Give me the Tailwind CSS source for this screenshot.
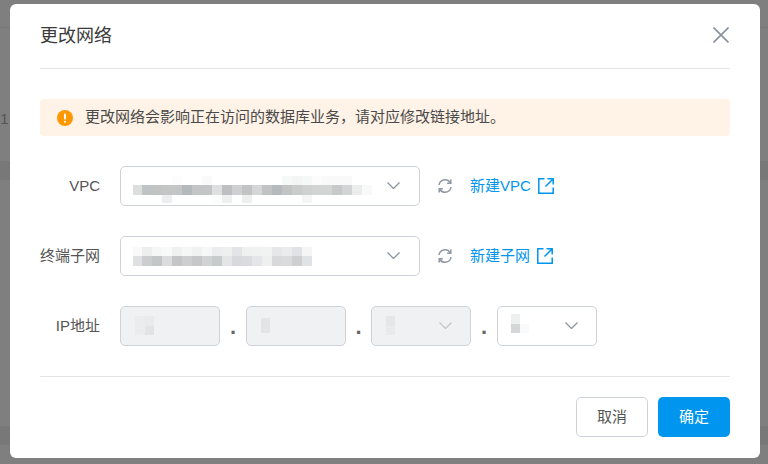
<!DOCTYPE html>
<html lang="zh-CN">
  <head>
    <meta charset="UTF-8" />
    <title>更改网络</title>
    <script src="https://cdn.jsdelivr.net/npm/@tailwindcss/browser@4"></script>
  </head>
  <body class="m-0 w-[768px] h-[464px] overflow-hidden bg-[#7f7f7f] font-['Liberation_Sans','Noto_Sans_CJK_SC',sans-serif]">
    <div class="relative w-[768px] h-[464px] pt-[4px] pl-[10px]">
      <!-- page behind the overlay -->
      <div class="absolute left-0 top-[27px] w-full h-px bg-[#777]"></div>
      <div class="absolute left-0 top-[161px] w-full h-[19px] bg-[#787878]"></div>
      <div class="absolute left-0 top-[426px] w-full h-[19px] bg-[#787878]"></div>
      <div class="absolute -left-[8px] top-[109px] text-[15px] leading-5 text-[#555]">31</div>

      <!-- Dialog -->
      <div class="relative w-[750px] h-[454px] bg-white rounded-[6px] px-[30px]">
        <div class="flex items-center justify-between h-[65px] border-b border-[#e2e5e9]">
          <h1 class="text-[18px] leading-[62px] font-normal text-[#3a3a3a]">更改网络</h1>
          <svg class="mr-[1px] -mt-[2px]" width="16" height="16" viewBox="0 0 16 16" fill="none" stroke="#87919c" stroke-width="1.6">
            <path d="M0.5 0.5 L15.5 15.5 M15.5 0.5 L0.5 15.5" />
          </svg>
        </div>

        <!-- Alert -->
        <div class="flex items-center h-[37px] mt-[30px] px-[17px] gap-[12px] bg-[#fff2e6] rounded-[4px] text-[15px] text-[#4a4a4a]">
          <svg width="16" height="16" viewBox="0 0 16 16">
            <circle cx="8" cy="8" r="8" fill="#ff9800" />
            <rect x="7" y="3.5" width="2" height="6" rx="1" fill="#fff" />
            <rect x="7" y="10.8" width="2" height="2" rx="1" fill="#fff" />
          </svg>
          <span>更改网络会影响正在访问的数据库业务，请对应修改链接地址。</span>
        </div>

        <!-- Form -->
        <div class="flex flex-col gap-[30px] mt-[30px]">
          <div class="flex items-center h-[40px]">
            <label class="w-[60px] text-right text-[15px] text-[#555]">VPC</label>
            <div class="flex items-center justify-between w-[300px] h-[40px] ml-[20px] pl-[12px] pr-[19px] border border-[#ced3d9] rounded-[5px]">
              <svg class="mt-[6px]" width="240" height="27" viewBox="133 172 240 27">
                <rect x="172" y="172" width="10" height="9" fill="#fcfcfc" />
                <rect x="202" y="172" width="10" height="9" fill="#fafafa" />
                <rect x="282" y="172" width="10" height="9" fill="#f6f8f7" />
                <rect x="292" y="172" width="10" height="9" fill="#f3f5f4" />
                <rect x="302" y="172" width="10" height="9" fill="#f6f8f7" />
                <rect x="312" y="172" width="10" height="9" fill="#fcfcfc" />
                <rect x="322" y="172" width="30" height="9" fill="#f8f9f8" />
                <rect x="133" y="181" width="9" height="10" fill="#dcdddd" />
                <rect x="142" y="181" width="10" height="10" fill="#bfc3c3" />
                <rect x="152" y="181" width="10" height="10" fill="#c2c4c4" />
                <rect x="162" y="181" width="20" height="10" fill="#c4c6c6" />
                <rect x="182" y="181" width="10" height="10" fill="#b4b9bc" />
                <rect x="192" y="181" width="10" height="10" fill="#c2c5c5" />
                <rect x="202" y="181" width="10" height="10" fill="#c4c6c6" />
                <rect x="212" y="181" width="10" height="10" fill="#dedfe0" />
                <rect x="222" y="181" width="10" height="10" fill="#bdbfc0" />
                <rect x="232" y="181" width="10" height="10" fill="#cfd0d1" />
                <rect x="242" y="181" width="10" height="10" fill="#c2c3c4" />
                <rect x="252" y="181" width="10" height="10" fill="#d5d6d6" />
                <rect x="262" y="181" width="10" height="10" fill="#c2c3c4" />
                <rect x="272" y="181" width="10" height="10" fill="#b5babd" />
                <rect x="282" y="181" width="10" height="10" fill="#c2c4c4" />
                <rect x="292" y="181" width="10" height="10" fill="#cacbcb" />
                <rect x="302" y="181" width="10" height="10" fill="#cfd0d0" />
                <rect x="312" y="181" width="20" height="10" fill="#d3d4d4" />
                <rect x="332" y="181" width="10" height="10" fill="#c8c9ca" />
                <rect x="342" y="181" width="10" height="10" fill="#d3d4d4" />
                <rect x="352" y="181" width="10" height="10" fill="#ebecec" />
                <rect x="362" y="181" width="10" height="10" fill="#f9f9f9" />
                <rect x="162" y="191" width="10" height="8" fill="#eceeef" />
                <rect x="212" y="191" width="10" height="8" fill="#fcfcfc" />
                <rect x="222" y="191" width="10" height="8" fill="#eeefef" />
                <rect x="242" y="191" width="10" height="8" fill="#eeefef" />
                <rect x="302" y="191" width="10" height="8" fill="#f5f5f5" />
              </svg>
              <svg class="-mt-[1px]" width="13" height="7" viewBox="0 0 13 7" fill="none" stroke="#8c949e" stroke-width="1.3">
                <path d="M0.5 0.5 L6.5 6.5 L12.5 0.5" />
              </svg>
            </div>
            <svg class="ml-[17px]" width="16" height="16" viewBox="0 0 16 16" fill="none" stroke="#8f97a1" stroke-width="1.5">
              <path d="M2 7 A6 6 0 0 1 13 4.5" />
              <path d="M13.8 1.5 V5.2 H10.2" />
              <path d="M14 9 A6 6 0 0 1 3 11.5" />
              <path d="M2.2 14.5 V10.8 H5.8" />
            </svg>
            <a class="flex items-center ml-[17px] text-[15px] text-[#0095ee]">新建VPC
              <svg class="ml-[7px]" width="16" height="16" viewBox="0 0 16 16" fill="none" stroke="#0095ee" stroke-width="1.5">
                <path d="M6.5 0.8 H0.8 V15.2 H15.2 V9.5" />
                <path d="M9.5 0.8 H15.2 V6.5 M15 1 L7.5 8.5" />
              </svg>
            </a>
          </div>

          <div class="flex items-center h-[40px]">
            <label class="w-[60px] text-right text-[15px] text-[#555]">终端子网</label>
            <div class="flex items-center justify-between w-[300px] h-[40px] ml-[20px] pl-[12px] pr-[19px] border border-[#ced3d9] rounded-[5px]">
              <svg width="179" height="19" viewBox="133 245 179 19">
                <rect x="133" y="245" width="9" height="9" fill="#f9f9f9" />
                <rect x="142" y="245" width="10" height="9" fill="#ecefee" />
                <rect x="152" y="245" width="10" height="9" fill="#f5f6f6" />
                <rect x="162" y="245" width="10" height="9" fill="#f9f9f9" />
                <rect x="172" y="245" width="10" height="9" fill="#eff1f0" />
                <rect x="182" y="245" width="10" height="9" fill="#f5f6f6" />
                <rect x="192" y="245" width="10" height="9" fill="#f0f2f1" />
                <rect x="202" y="245" width="10" height="9" fill="#f6f7f7" />
                <rect x="212" y="245" width="10" height="9" fill="#ecedee" />
                <rect x="222" y="245" width="10" height="9" fill="#eeefef" />
                <rect x="232" y="245" width="10" height="9" fill="#e3e4e6" />
                <rect x="242" y="245" width="10" height="9" fill="#eff1f0" />
                <rect x="252" y="245" width="10" height="9" fill="#f0f1f1" />
                <rect x="262" y="245" width="10" height="9" fill="#f1f3f2" />
                <rect x="272" y="245" width="10" height="9" fill="#e6e7e9" />
                <rect x="282" y="245" width="10" height="9" fill="#eaebed" />
                <rect x="292" y="245" width="10" height="9" fill="#e1e2e5" />
                <rect x="302" y="245" width="10" height="9" fill="#f5f5f6" />
                <rect x="133" y="254" width="9" height="10" fill="#dfe0e1" />
                <rect x="142" y="254" width="10" height="10" fill="#cbcdce" />
                <rect x="152" y="254" width="10" height="10" fill="#c3c7c7" />
                <rect x="162" y="254" width="10" height="10" fill="#dbdcdd" />
                <rect x="172" y="254" width="10" height="10" fill="#c3c5c6" />
                <rect x="182" y="254" width="10" height="10" fill="#cdced0" />
                <rect x="192" y="254" width="10" height="10" fill="#c5c7c8" />
                <rect x="202" y="254" width="10" height="10" fill="#d1d2d3" />
                <rect x="212" y="254" width="10" height="10" fill="#c8cbcc" />
                <rect x="222" y="254" width="10" height="10" fill="#e4e5e7" />
                <rect x="232" y="254" width="10" height="10" fill="#d8d9dc" />
                <rect x="242" y="254" width="10" height="10" fill="#dadbde" />
                <rect x="252" y="254" width="10" height="10" fill="#e4e5e7" />
                <rect x="262" y="254" width="10" height="10" fill="#eef0ef" />
                <rect x="272" y="254" width="10" height="10" fill="#d8d9db" />
                <rect x="282" y="254" width="10" height="10" fill="#dadbdc" />
                <rect x="292" y="254" width="10" height="10" fill="#cecfd1" />
                <rect x="302" y="254" width="10" height="10" fill="#e1e2e5" />
              </svg>
              <svg class="-mt-[1px]" width="13" height="7" viewBox="0 0 13 7" fill="none" stroke="#8c949e" stroke-width="1.3">
                <path d="M0.5 0.5 L6.5 6.5 L12.5 0.5" />
              </svg>
            </div>
            <svg class="ml-[17px]" width="16" height="16" viewBox="0 0 16 16" fill="none" stroke="#8f97a1" stroke-width="1.5">
              <path d="M2 7 A6 6 0 0 1 13 4.5" />
              <path d="M13.8 1.5 V5.2 H10.2" />
              <path d="M14 9 A6 6 0 0 1 3 11.5" />
              <path d="M2.2 14.5 V10.8 H5.8" />
            </svg>
            <a class="flex items-center ml-[17px] text-[15px] text-[#0095ee]">新建子网
              <svg class="ml-[7px]" width="16" height="16" viewBox="0 0 16 16" fill="none" stroke="#0095ee" stroke-width="1.5">
                <path d="M6.5 0.8 H0.8 V15.2 H15.2 V9.5" />
                <path d="M9.5 0.8 H15.2 V6.5 M15 1 L7.5 8.5" />
              </svg>
            </a>
          </div>

          <div class="flex items-center h-[40px]">
            <label class="w-[60px] text-right text-[15px] text-[#555]">IP地址</label>
            <div class="flex items-center ml-[20px]">
              <div class="w-[100px] h-[40px] pl-[14px] flex items-center bg-[#eff1f3] border border-[#ced3d9] rounded-[5px]">
                <svg class="-mt-[1px]" width="19" height="19" viewBox="0 0 19 19">
                  <rect width="10" height="10" fill="#ebecee" />
                  <rect x="10" width="9" height="10" fill="#e8eaec" />
                  <rect y="10" width="10" height="9" fill="#ebecee" />
                  <rect x="10" y="10" width="9" height="9" fill="#e1e4e7" />
                </svg>
              </div>
              <span class="w-[26px] text-center text-[22px] font-bold leading-[40px] pt-[1px] text-[#666]">.</span>
              <div class="w-[100px] h-[40px] pl-[14px] flex items-center bg-[#eff1f3] border border-[#ced3d9] rounded-[5px]">
                <div class="w-[9px] h-[15px] -mt-[1px] bg-[#e3e4e7]"></div>
              </div>
              <span class="w-[25px] text-center text-[22px] font-bold leading-[40px] pt-[1px] text-[#666]">.</span>
              <div class="w-[100px] h-[40px] pl-[14px] pr-[18px] flex items-center justify-between bg-[#eff1f3] border border-[#ced3d9] rounded-[5px]">
                <div class="flex flex-col w-[9px] -mt-[1px]">
                  <div class="h-[10px] bg-[#e5e6e8]"></div>
                  <div class="h-[9px] bg-[#e9eaec]"></div>
                </div>
                <svg class="-mt-[1px]" width="13" height="7" viewBox="0 0 13 7" fill="none" stroke="#c3c7cc" stroke-width="1.3">
                  <path d="M0.5 0.5 L6.5 6.5 L12.5 0.5" />
                </svg>
              </div>
              <span class="w-[26px] text-center text-[22px] font-bold leading-[40px] pt-[1px] text-[#666]">.</span>
              <div class="w-[100px] h-[40px] pl-[13px] pr-[18px] flex items-center justify-between bg-white border border-[#ced3d9] rounded-[5px]">
                <svg class="-mt-[5px]" width="18" height="19" viewBox="0 0 18 19">
                  <rect width="9" height="10" fill="#eef0ef" />
                  <rect y="10" width="9" height="9" fill="#d5d6d7" />
                  <rect x="9" y="10" width="9" height="9" fill="#fafafa" />
                </svg>
                <svg class="-mt-[1px]" width="13" height="7" viewBox="0 0 13 7" fill="none" stroke="#8c949e" stroke-width="1.3">
                  <path d="M0.5 0.5 L6.5 6.5 L12.5 0.5" />
                </svg>
              </div>
            </div>
          </div>
        </div>

        <!-- Footer -->
        <div class="flex justify-end gap-[10px] mt-[30px] pt-[20px] border-t border-[#e2e5e9]">
          <button class="w-[72px] h-[40px] bg-white border border-[#ced3d9] rounded-[5px] text-[15px] text-[#555]">取消</button>
          <button class="w-[72px] h-[40px] bg-[#0095ee] rounded-[5px] text-[15px] text-white">确定</button>
        </div>
      </div>
    </div>
  </body>
</html>
